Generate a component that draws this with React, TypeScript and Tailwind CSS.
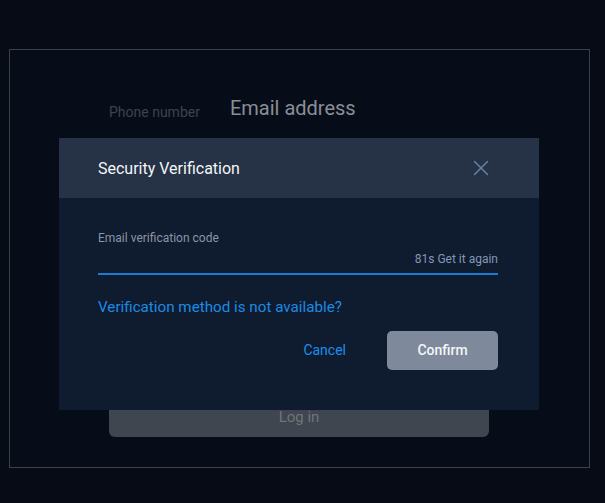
import { X } from 'lucide-react';

export default function App() {
  return (
    <main
      className="relative w-[605px] h-[503px] overflow-hidden bg-[#060b15]"
      style={{ fontFamily: 'Roboto, "Liberation Sans", sans-serif' }}
    >
      {/* login card behind the dialog (dimmed) */}
      <div className="ml-[9px] mt-[49px] w-[581px] h-[419px] border border-[#3b414c] bg-[#070d18] pt-[45px]">
        <div className="flex items-end pl-[99px] h-[27px]">
          <span className="text-[14px] leading-[20px] text-[#3c4452]">Phone number</span>
          <span className="ml-[30px] text-[20px] leading-[27px] text-[#8a8e95]">Email address</span>
        </div>
        <div className="h-[273px]" />
        <div className="ml-[99px] w-[380px] h-[42px] rounded-b-[6px] bg-[#40464f] flex items-center justify-center pt-[3px]">
          <span className="text-[15px] text-[#6f757c]">Log in</span>
        </div>
      </div>

      {/* dialog */}
      <div className="absolute left-[59px] top-[138px] w-[480px] h-[272px] bg-[#0f1b2f] flex flex-col">
        <div className="h-[60px] bg-[#263246] flex items-center justify-between pl-[39px] pr-[45px]">
          <span className="text-[16px] font-[450] text-[#f4f6f8] pt-[2px]">Security Verification</span>
          <X size={26} strokeWidth={1.3} className="text-[#6a81a1]" />
        </div>
        <div className="pl-[39px] pr-[41px] pt-[33px]">
          <div className="text-[12px] leading-[14px] text-[#8a95a6]">Email verification code</div>
          <div className="mt-[7px] flex justify-end text-[12px] leading-[14px] text-[#8497b2]">81s Get it again</div>
          <div className="mt-[7px] h-[2px] bg-[#1b7ccf]" />
          <div className="mt-[23px] text-[15.2px] leading-[18px] text-[#1c8be2]">Verification method is not available?</div>
          <div className="mt-[15px] flex items-center justify-end">
            <span className="text-[14px] text-[#1d8ef0]">Cancel</span>
            <button className="ml-[41px] w-[111px] h-[39px] rounded-[5px] bg-[#7e899b] text-[14px] font-medium text-[#f4f6f8]">
              Confirm
            </button>
          </div>
        </div>
      </div>
    </main>
  );
}
